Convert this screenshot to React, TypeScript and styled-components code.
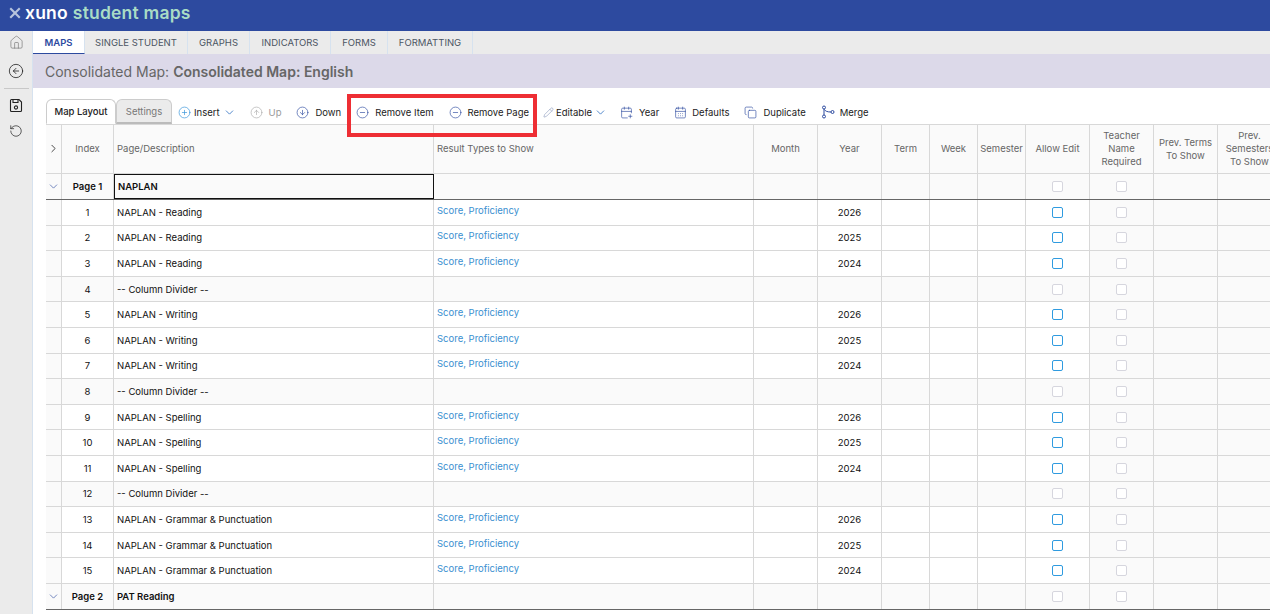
import React from "react"
import styled, { createGlobalStyle } from "styled-components"
import {
  Home,
  CircleArrowLeft,
  RotateCcw,
  CirclePlus,
  ChevronDown,
  ChevronRight,
  CircleArrowUp,
  CircleArrowDown,
  CircleMinus,
  Pencil,
  CalendarPlus,
  CalendarDays,
  Copy,
} from "lucide-react"

const COLUMNS = "16px 52px 320px 320px 64px 64px 48px 48px 48px 64px 64px 64px 64px"

const GlobalStyle = createGlobalStyle`
  html, body { margin: 0; padding: 0; height: 100%; overflow: hidden; }
  body { font-family: Inter, "Liberation Sans", sans-serif; background: #fff; color: #111; }
`

const Page = styled.div`
  height: 614px;
  width: 1270px;
  overflow: hidden;
  display: flex;
  flex-direction: column;
`

const Banner = styled.header`
  height: 31px;
  flex: none;
  background: #2d4a9f;
  display: flex;
  align-items: center;
  padding: 0 0 6px 9px;
  box-sizing: border-box;
  gap: 4px;
  font-size: 17.5px;
  font-weight: 600;
  letter-spacing: 0.2px;
`

const LogoWhite = styled.span`
  color: #fff;
`

const LogoGreen = styled.span`
  color: #a9dcc6;
  margin-left: 1px;
`

const Body = styled.div`
  flex: 1;
  display: flex;
  min-height: 0;
`

const Sidebar = styled.aside`
  width: 33px;
  flex: none;
  box-sizing: border-box;
  background: #ebebeb;
  border-right: 1px solid #d6e2ef;
  display: flex;
  flex-direction: column;
  align-items: center;
  color: #222;
`

const SideHome = styled.div`
  width: 100%;
  height: 23px;
  display: flex;
  align-items: center;
  justify-content: center;
  color: #777;
`

const SideButton = styled.div`
  height: 34px;
  display: flex;
  align-items: center;
  justify-content: center;
`

const SideRule = styled.div`
  width: 25px;
  height: 1px;
  background: #c8c8c8;
`

const SideTools = styled.div`
  display: flex;
  flex-direction: column;
  align-items: center;
  gap: 11px;
  padding-top: 9px;
`

const Main = styled.main`
  flex: 1;
  min-width: 0;
  display: flex;
  flex-direction: column;
`

const TabBar = styled.nav`
  height: 23px;
  flex: none;
  display: flex;
  background: #ebebeb;
`

const Tab = styled.div<{ $active?: boolean; $w: number }>`
  width: ${(p) => p.$w}px;
  box-sizing: border-box;
  display: flex;
  align-items: center;
  justify-content: center;
  font-size: 9.5px;
  font-weight: ${(p) => (p.$active ? 600 : 400)};
  color: ${(p) => (p.$active ? "#2d4a9f" : "#4b5563")};
  background: ${(p) => (p.$active ? "#fff" : "transparent")};
  border-right: 1px solid #d6e2ef;
  border-bottom: ${(p) => (p.$active ? "1px solid #2d4a9f" : "none")};
`

const TitleBand = styled.div`
  height: 34px;
  flex: none;
  background: #dcd9e9;
  display: flex;
  align-items: center;
  padding-left: 12px;
  font-size: 14px;
  color: #666;
`

const TitleStrong = styled.strong`
  font-weight: 600;
  margin-left: 4px;
`

const ToolRow = styled.div`
  position: relative;
  height: 36px;
  flex: none;
  display: flex;
  align-items: flex-end;
  padding-left: 13px;
  box-sizing: border-box;
`

const SubTab = styled.div<{ $active?: boolean; $w: number }>`
  width: ${(p) => p.$w}px;
  height: 25px;
  box-sizing: border-box;
  display: flex;
  align-items: center;
  justify-content: center;
  font-size: 9.5px;
  border: 1px solid #ccc;
  border-radius: 6px 6px 0 0;
  background: ${(p) => (p.$active ? "#fff" : "#ebebeb")};
  color: ${(p) => (p.$active ? "#222" : "#777")};
  font-weight: ${(p) => (p.$active ? 500 : 400)};
  border-bottom-color: ${(p) => (p.$active ? "#fff" : "#bbb")};
  border-bottom-width: ${(p) => (p.$active ? "1px" : "2px")};
`

const Actions = styled.div`
  display: flex;
  align-items: center;
  height: 24px;
  padding-left: 6px;
`

const Action = styled.div<{ $gap?: number; $next?: number; $off?: boolean }>`
  display: flex;
  align-items: center;
  gap: ${(p) => p.$gap ?? 6}px;
  margin-right: ${(p) => p.$next ?? 15}px;
  font-size: 9.5px;
  color: ${(p) => (p.$off ? "#999" : "#222")};
  white-space: nowrap;
`

const Highlight = styled.div`
  position: absolute;
  left: 314px;
  top: 6px;
  width: 190px;
  height: 43px;
  box-sizing: border-box;
  border: 4px solid #ee2e34;
  z-index: 3;
`

const Table = styled.div`
  margin-left: 13px;
  flex: 1;
  border-top: 1px solid #d8d8d8;
  overflow: hidden;
`

const Row = styled.div<{ $h: number; $page?: boolean; $head?: boolean }>`
  display: grid;
  grid-template-columns: ${COLUMNS};
  height: ${(p) => p.$h}px;
  box-sizing: border-box;
  border-bottom: ${(p) => (p.$page ? "1px solid #666" : "1px solid #d8d8d8")};
  background: ${(p) => (p.$page || p.$head ? "#fafafa" : "#fff")};
`

const Cell = styled.div<{ $tone?: "shade" | "divider"; $align?: "left" | "center" }>`
  box-sizing: border-box;
  min-width: 0;
  display: flex;
  align-items: center;
  justify-content: ${(p) => (p.$align === "left" ? "flex-start" : "center")};
  text-align: ${(p) => p.$align ?? "center"};
  border-right: 1px solid #d8d8d8;
  padding: ${(p) => (p.$align === "left" ? "0 3px" : "0")};
  font-size: 9.5px;
  background: ${(p) => (p.$tone === "shade" ? "#fafafa" : "transparent")};
  overflow: hidden;
`

const HeadCell = styled(Cell)`
  color: #666;
  line-height: 13px;
  white-space: pre-line;
  padding-bottom: 1px;
`

const TopHead = styled(HeadCell)`
  align-items: flex-start;
  padding-top: 17px;
`

const Selected = styled(Cell)`
  border: 1px solid #111;
  font-weight: 600;
`

const PageName = styled(Cell)`
  font-weight: 600;
`

const TypeCell = styled(Cell)`
  color: #3a8fd0;
  padding-bottom: 4px;
`

const Box = styled.span<{ $on?: boolean }>`
  width: 11px;
  height: 11px;
  box-sizing: border-box;
  border-radius: 2px;
  background: #fff;
  border: 1px solid ${(p) => (p.$on ? "#2f9be0" : "#d6d6de")};
`

const SaveIcon = () => (
  <svg width="14" height="15" viewBox="0 0 14 15" fill="none" stroke="#222" strokeWidth="1.1">
    <path d="M1.5 2.5a1 1 0 0 1 1-1h7.5l2.5 2.5v8.5a1 1 0 0 1-1 1h-9a1 1 0 0 1-1-1z" />
    <path d="M4 1.5v3h5v-3" />
    <circle cx="7" cy="9.5" r="1.6" />
  </svg>
)

const LogoMark = () => (
  <svg width="12" height="12" viewBox="0 0 12 12" fill="#b7c4dd">
    <path d="M0.5 2 L2 0.5 L6 4.5 L10 0.5 L11.5 2 L7.5 6 L11.5 10 L10 11.5 L6 7.5 L2 11.5 L0.5 10 L4.5 6 Z" />
  </svg>
)

const MergeIcon = () => (
  <svg width="14" height="14" viewBox="0 0 14 14" fill="none" stroke="#2d4a9f" strokeWidth="1">
    <circle cx="3" cy="2.5" r="1.5" />
    <circle cx="3" cy="11.5" r="1.5" />
    <circle cx="11.5" cy="7" r="1.5" />
    <path d="M3 4v6M3.5 4.5 Q4.5 7 10 7" />
  </svg>
)

const blueIcon = { size: 13, strokeWidth: 1.2, color: "#2d4a9f" }

type Item = { no: number; name: string; year?: string; divider?: boolean }

const buildItems = (): Item[] => {
  const groups = ["Reading", "Writing", "Spelling", "Grammar & Punctuation"]
  const items: Item[] = []
  let no = 1
  groups.forEach((g, i) => {
    ;["2026", "2025", "2024"].forEach((year) => {
      items.push({ no: no++, name: `NAPLAN - ${g}`, year })
    })
    if (i < groups.length - 1) items.push({ no: no++, name: "-- Column Divider --", divider: true })
  })
  return items
}

const PageRow = ({ label, name, selected }: { label: string; name: string; selected?: boolean }) => (
  <Row $h={selected ? 26 : 25.6} $page>
    <Cell>
      <ChevronDown size={13} strokeWidth={1.2} color="#2d4a9f" />
    </Cell>
    <Cell style={{ fontWeight: 600 }}>{label}</Cell>
    {selected ? <Selected $align="left">{name}</Selected> : <PageName $align="left">{name}</PageName>}
    <Cell />
    <Cell />
    <Cell />
    <Cell />
    <Cell />
    <Cell />
    <Cell>
      <Box />
    </Cell>
    <Cell>
      <Box />
    </Cell>
    <Cell />
    <Cell />
  </Row>
)

const ItemRow = ({ item }: { item: Item }) => (
  <Row $h={25.6}>
    <Cell $tone="shade" />
    <Cell $tone={item.divider ? "shade" : undefined}>{item.no}</Cell>
    <Cell $align="left" $tone={item.divider ? "shade" : undefined}>
      {item.name}
    </Cell>
    {item.divider ? <Cell $tone="shade" /> : <TypeCell $align="left">Score, Proficiency</TypeCell>}
    <Cell $tone={item.divider ? "shade" : undefined} />
    <Cell $tone={item.divider ? "shade" : undefined}>{item.year}</Cell>
    <Cell $tone={item.divider ? "shade" : undefined} />
    <Cell $tone={item.divider ? "shade" : undefined} />
    <Cell $tone={item.divider ? "shade" : undefined} />
    <Cell $tone={item.divider ? "shade" : undefined}>
      <Box $on={!item.divider} />
    </Cell>
    <Cell $tone="shade">
      <Box />
    </Cell>
    <Cell $tone="shade" />
    <Cell $tone="shade" />
  </Row>
)

export default function App() {
  const items = buildItems()
  return (
    <Page>
      <GlobalStyle />
      <Banner>
        <LogoMark />
        <LogoWhite>xuno</LogoWhite>
        <LogoGreen>student maps</LogoGreen>
      </Banner>
      <Body>
        <Sidebar>
          <SideHome>
            <Home size={15} strokeWidth={1.1} />
          </SideHome>
          <SideButton>
            <CircleArrowLeft size={16} strokeWidth={1.2} />
          </SideButton>
          <SideRule />
          <SideTools>
            <SaveIcon />
            <RotateCcw size={14} strokeWidth={1.2} />
          </SideTools>
        </Sidebar>
        <Main>
          <TabBar>
            <Tab $w={52} $active>
              MAPS
            </Tab>
            <Tab $w={103}>SINGLE STUDENT</Tab>
            <Tab $w={62}>GRAPHS</Tab>
            <Tab $w={81}>INDICATORS</Tab>
            <Tab $w={57}>FORMS</Tab>
            <Tab $w={85}>FORMATTING</Tab>
          </TabBar>
          <TitleBand>
            Consolidated Map:<TitleStrong>Consolidated Map: English</TitleStrong>
          </TitleBand>
          <ToolRow>
            <SubTab $w={70} $active>
              Map Layout
            </SubTab>
            <SubTab $w={56}>Settings</SubTab>
            <Actions>
              <Action $gap={3} $next={14}>
                <CirclePlus size={13} strokeWidth={1.2} color="#2f8fd8" />
                Insert
                <ChevronDown size={13} strokeWidth={1.5} color="#2d6fc0" />
              </Action>
              <Action $off>
                <CircleArrowUp size={13} strokeWidth={1.2} color="#aaa" />
                Up
              </Action>
              <Action>
                <CircleArrowDown {...blueIcon} />
                Down
              </Action>
              <Action>
                <CircleMinus {...blueIcon} />
                Remove Item
              </Action>
              <Action $next={14}>
                <CircleMinus {...blueIcon} />
                Remove Page
              </Action>
              <Action $gap={2} $next={13}>
                <Pencil size={11} strokeWidth={1.2} color="#7f8fb5" />
                Editable
                <ChevronDown size={13} strokeWidth={1.5} color="#2d6fc0" />
              </Action>
              <Action>
                <CalendarPlus {...blueIcon} />
                Year
              </Action>
              <Action $gap={5}>
                <CalendarDays {...blueIcon} />
                Defaults
              </Action>
              <Action>
                <Copy {...blueIcon} />
                Duplicate
              </Action>
              <Action $gap={5}>
                <MergeIcon />
                Merge
              </Action>
            </Actions>
            <Highlight />
          </ToolRow>
          <Table>
            <Row $h={49} $head>
              <HeadCell>
                <ChevronRight size={13} strokeWidth={1.5} color="#222" />
              </HeadCell>
              <HeadCell>Index</HeadCell>
              <TopHead $align="left">Page/Description</TopHead>
              <TopHead $align="left">Result Types to Show</TopHead>
              <TopHead>Month</TopHead>
              <HeadCell>Year</HeadCell>
              <HeadCell>Term</HeadCell>
              <HeadCell>Week</HeadCell>
              <HeadCell>Semester</HeadCell>
              <HeadCell>Allow Edit</HeadCell>
              <HeadCell>{"Teacher\nName\nRequired"}</HeadCell>
              <HeadCell>{"Prev. Terms\nTo Show"}</HeadCell>
              <HeadCell>{"Prev.\nSemesters\nTo Show"}</HeadCell>
            </Row>
            <PageRow label="Page 1" name="NAPLAN" selected />
            {items.map((item) => (
              <ItemRow key={item.no} item={item} />
            ))}
            <PageRow label="Page 2" name="PAT Reading" />
          </Table>
        </Main>
      </Body>
    </Page>
  )
}
